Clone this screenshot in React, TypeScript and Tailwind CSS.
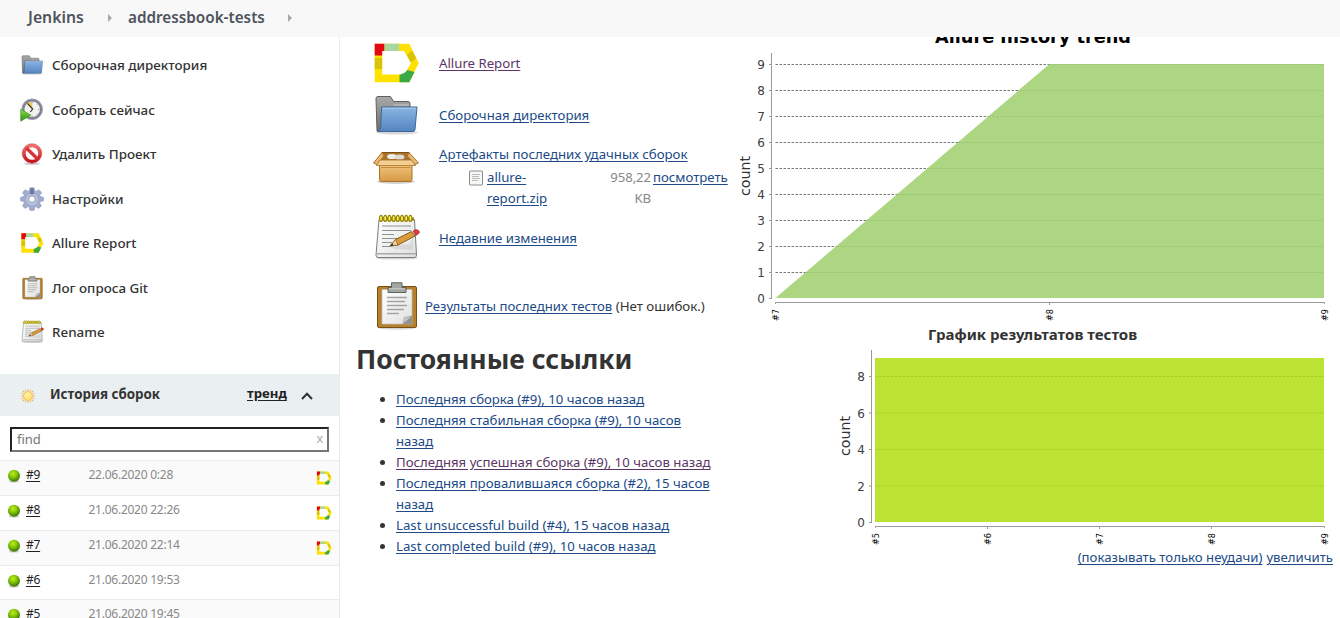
import type { ReactNode } from 'react';

type IconProps = { className?: string };

function Gradients() {
  return (
    <svg width="0" height="0" className="absolute" aria-hidden="true">
      <defs>
        <linearGradient id="blue" x1="0" y1="0" x2="0" y2="1"><stop offset="0" stopColor="#8ab4e2" /><stop offset="1" stopColor="#5484c0" /></linearGradient>
        <linearGradient id="grey" x1="0" y1="0" x2="0" y2="1"><stop offset="0" stopColor="#a9aaa8" /><stop offset="1" stopColor="#6d6e6c" /></linearGradient>
        <linearGradient id="box" x1="0" y1="0" x2="0" y2="1"><stop offset="0" stopColor="#f3c67f" /><stop offset="1" stopColor="#d59a45" /></linearGradient>
        <linearGradient id="paper" x1="0" y1="0" x2="1" y2="1"><stop offset="0" stopColor="#ffffff" /><stop offset="1" stopColor="#dfe0e0" /></linearGradient>
        <linearGradient id="red" x1="0" y1="0" x2="0" y2="1"><stop offset="0" stopColor="#f07070" /><stop offset="1" stopColor="#c41418" /></linearGradient>
        <linearGradient id="play" x1="0" y1="0" x2="0" y2="1"><stop offset="0" stopColor="#8be04a" /><stop offset="1" stopColor="#2f8a10" /></linearGradient>
        <radialGradient id="ball" cx="0.42" cy="0.32" r="0.65"><stop offset="0" stopColor="#bdf016" /><stop offset="0.5" stopColor="#83c40a" /><stop offset="1" stopColor="#3f7806" /></radialGradient>
        <radialGradient id="sun" cx="0.45" cy="0.4" r="0.6"><stop offset="0" stopColor="#fff6b0" /><stop offset="1" stopColor="#fbd75a" /></radialGradient>
      </defs>
    </svg>
  );
}

function AllureIcon({ className }: IconProps) {
  return (
    <svg viewBox="0 0 48 48" className={className}>
      <path fill="#ffe100" fillRule="evenodd" d="M2.7 4.7H37.3L46.7 24L37.3 43.3H2.7ZM10.2 12V35.5H29L32.5 35L39 24L32 12Z" />
      <path fill="#e30613" d="M2.7 4.7H12.5V12H10.2V16.5H2.7Z" />
      <path fill="#a8d8a0" d="M12.5 4.7H27V12H12.5Z" />
      <path fill="#d9c20a" d="M2.7 19H10.2V30H2.7ZM35 16L40 11.5L44.4 19.5L38.6 23.5Z" />
      <path fill="#3ba946" d="M27.5 36L33 33.5L35.5 31L42.5 33L37.3 43.3H27.5Z" />
    </svg>
  );
}

function FolderIcon({ className }: IconProps) {
  return (
    <svg viewBox="0 0 48 48" className={className}>
      <ellipse cx="25" cy="41.5" rx="21" ry="2" fill="#d8d8d8" />
      <path d="M5 40L4 7.5Q4 5.5 6 5.5H18.5L21.5 10.5H36Q38 10.5 38 12.5V39Z" fill="url(#grey)" stroke="#5f605e" />
      <path d="M21.5 14H37" stroke="#c9cac8" />
      <path d="M9.5 16H45L43 38.5Q42.8 40.5 41 40.5H5.5Q8.5 39 8.7 36Z" fill="url(#blue)" stroke="#3d659b" />
      <path d="M10.5 17.2H43.7" stroke="#b5d0ee" strokeWidth="0.9" />
    </svg>
  );
}

function BoxIcon({ className }: IconProps) {
  return (
    <svg viewBox="0 0 48 48" className={className}>
      <ellipse cx="24" cy="38.7" rx="19" ry="2.2" fill="#d5d2cd" />
      <path d="M10 9.5H37L41 20H6Z" fill="#a8742d" stroke="#7d5018" />
      <ellipse cx="20" cy="13.5" rx="5" ry="2.6" fill="#efede8" /><ellipse cx="27.5" cy="14" rx="5" ry="2.6" fill="#dedbd4" />
      <path d="M7.5 21H40V36.5Q40 38.5 38 38.5H9.5Q7.5 38.5 7.5 36.5Z" fill="url(#box)" stroke="#a87328" />
      <path d="M10 9.5L1.5 20L5 21.5L12 13ZM37 9.5L46.5 20L43 21.5L35.5 13Z" fill="#e9ba72" stroke="#a87328" />
      <path d="M8 17H39.5L43.5 22.5H4.5Z" fill="#f4cf94" stroke="#a87328" strokeWidth="0.8" />
      <path d="M9 24.5H38.5" stroke="#c58d3c" strokeWidth="1" />
    </svg>
  );
}

function NotepadIcon({ className }: IconProps) {
  return (
    <svg viewBox="0 0 48 48" className={className}>
      <ellipse cx="25" cy="44" rx="21" ry="1.6" fill="#d5d5d5" />
      <path d="M7 5.5H42.5L44.5 41Q44.5 43.5 42.5 43.5H6Q4 43.5 4 41Z" fill="url(#paper)" stroke="#7c7d7b" />
      <path d="M5 39.7H44" stroke="#a9aaa9" strokeWidth="1.5" />
      <path d="M10 12H39M10 16.5H39M10 20.5H22M10 24.5H34M10 28.5H20M10 32.5H19" stroke="#90928f" strokeWidth="1.1" />
      <path d="M19 32L38 30L41 23V36L22 35Z" fill="#c8c8c8" opacity="0.5" />
      <path d="M7 5H42" stroke="#94860b" strokeWidth="3" />
      <g fill="#fff25b" stroke="#94860b" strokeWidth="1.2">
        <ellipse cx="9" cy="4.4" rx="1.5" ry="3" /><ellipse cx="13.2" cy="4.4" rx="1.5" ry="3" /><ellipse cx="17.4" cy="4.4" rx="1.5" ry="3" /><ellipse cx="21.6" cy="4.4" rx="1.5" ry="3" /><ellipse cx="25.8" cy="4.4" rx="1.5" ry="3" /><ellipse cx="30" cy="4.4" rx="1.5" ry="3" /><ellipse cx="34.2" cy="4.4" rx="1.5" ry="3" /><ellipse cx="38.4" cy="4.4" rx="1.5" ry="3" />
      </g>
      <path d="M18 32L23.5 25.5L39.5 17.5L43 22L26 31Z" fill="#d99a3d" stroke="#7e5012" strokeWidth="0.9" />
      <path d="M18 32L23.5 25.5L26 31Z" fill="#f0d3a0" stroke="#7e5012" strokeWidth="0.6" />
      <path d="M18 32L20.4 29.2L21.4 31.6Z" fill="#222" />
      <path d="M41 17L43.5 15.7Q47.5 15.5 47.3 19L44 21.4Z" fill="#dd3c3c" stroke="#a32626" strokeWidth="0.7" />
    </svg>
  );
}

function ClipboardIcon({ className }: IconProps) {
  return (
    <svg viewBox="0 0 48 48" className={className}>
      <ellipse cx="25" cy="46.3" rx="18" ry="1.5" fill="#d5d5d5" />
      <rect x="5.5" y="4.5" width="39" height="41" rx="1.5" fill="#b7802e" stroke="#79500f" />
      <path d="M10 7.5H40V42H10Z" fill="url(#paper)" stroke="#bfc0be" strokeWidth="0.7" />
      <path d="M40 34L31 42H40Z" fill="#8e9190" /><path d="M31 42L32.5 35.5L40 34Z" fill="#c6c8c7" stroke="#8e9190" strokeWidth="0.6" />
      <path d="M15 15.5H35M15 19.5H33M15 23.5H35M15 27.5H32M15 31.5H27" stroke="#a2a4a1" strokeWidth="1.5" />
      <path d="M16 5.5H19.5V0.8H30V5.5H34V10.5H16Z" fill="#a3a6a1" stroke="#5f625e" />
      <path d="M17 6.8H33" stroke="#d3d5d1" strokeWidth="0.9" />
    </svg>
  );
}

function ClockIcon({ className }: IconProps) {
  return (
    <svg viewBox="0 0 24 24" className={className}>
      <circle cx="12.2" cy="11.3" r="9.2" fill="#f2f2ee" stroke="#7e8193" strokeWidth="2.8" />
      <circle cx="12.2" cy="11.3" r="10.3" fill="none" stroke="#a9acbb" strokeWidth="0.9" />
      <path d="M12.5 11.3L6.2 5.8L12 3.5Z" fill="#e9cf63" />
      <path d="M7.5 5.3L12.7 11L10.3 14" fill="none" stroke="#333" strokeWidth="1.2" />
      <path d="M12.2 4.2V5.2M19.3 11.5H18.3M12.2 18.5V17.5M17.2 6.5L16.6 7.1M17.2 16.5L16.6 15.9" stroke="#777" strokeWidth="0.8" />
      <path d="M0.7 11.3L11 17.1L0.7 23.3Z" fill="url(#play)" stroke="#3b9415" strokeWidth="0.6" />
    </svg>
  );
}

function ForbiddenIcon({ className }: IconProps) {
  return (
    <svg viewBox="0 0 24 24" className={className}>
      <ellipse cx="12" cy="21.7" rx="8" ry="1.2" fill="#ccc" />
      <circle cx="12" cy="11.5" r="8" fill="#fff" stroke="url(#red)" strokeWidth="3.4" />
      <path d="M6.3 6L17.7 17" stroke="#d83436" strokeWidth="3.3" />
      <circle cx="12" cy="11.5" r="9.8" fill="none" stroke="#c22a2c" strokeWidth="0.5" />
    </svg>
  );
}

function GearIcon({ className }: IconProps) {
  return (
    <svg viewBox="0 0 24 24" className={className}>
      <path fillRule="evenodd" fill="#a3add0" stroke="#8089ab" strokeWidth="0.6" strokeLinejoin="round" d="M10 0.8H14L14.8 4L16 4.6L19 2.9L21.6 5.5L19.6 8.4L20.2 9.6L23.4 10.4V13.8L20.1 14.5L19.5 16L21.4 18.8L18.8 21.4L16 19.5L14.8 20L14 23.3H10L9.2 20L8 19.5L5 21.4L2.5 18.8L4.4 16L3.9 14.5L0.6 13.8V10.4L3.8 9.6L4.4 8.3L2.6 5.4L5.2 2.8L8 4.6L9.2 4ZM12 8.9A3.2 3.2 0 1 0 12 15.3A3.2 3.2 0 1 0 12 8.9Z" />
      <circle cx="12" cy="12.1" r="4.9" fill="none" stroke="#bcc4df" strokeWidth="1.8" />
      <path d="M10.5 1.3H13.5L14.2 6.5L12 7.5L9.8 6.5Z" fill="#6b789f" />
    </svg>
  );
}

function SunIcon({ className }: IconProps) {
  return (
    <svg viewBox="0 0 16 16" className={className}>
      <path d="M8 1.2V14.8M1.2 8H14.8M3 3L13 13M13 3L3 13M5.3 1.7L10.7 14.3M10.7 1.7L5.3 14.3M1.7 5.3L14.3 10.7M1.7 10.7L14.3 5.3" stroke="#e6b468" strokeWidth="1.1" />
      <circle cx="8" cy="8" r="5.6" fill="#fbeed0" />
      <circle cx="8" cy="8" r="4.6" fill="url(#sun)" stroke="#e9b252" strokeWidth="0.7" />
    </svg>
  );
}

function BallIcon({ className }: IconProps) {
  return (
    <svg viewBox="0 0 14 14" className={className}>
      <ellipse cx="7" cy="12.4" rx="5" ry="1.1" fill="#ccc" />
      <circle cx="7" cy="6.8" r="6" fill="url(#ball)" />
    </svg>
  );
}

const tasks: { label: string; icon: ReactNode }[] = [
  { label: 'Сборочная директория', icon: <FolderIcon className="size-6" /> },
  { label: 'Собрать сейчас', icon: <ClockIcon className="size-6" /> },
  { label: 'Удалить Проект', icon: <ForbiddenIcon className="size-6" /> },
  { label: 'Настройки', icon: <GearIcon className="size-6" /> },
  { label: 'Allure Report', icon: <AllureIcon className="size-6" /> },
  { label: 'Лог опроса Git', icon: <ClipboardIcon className="size-6" /> },
  { label: 'Rename', icon: <NotepadIcon className="size-6" /> },
];

const builds = [
  { id: '#9', date: '22.06.2020 0:28', allure: true, row: 'h-[35px] bg-[#fafafa]' },
  { id: '#8', date: '21.06.2020 22:26', allure: true, row: 'h-[35px] bg-white' },
  { id: '#7', date: '21.06.2020 22:14', allure: true, row: 'h-[35px] bg-[#fafafa]' },
  { id: '#6', date: '21.06.2020 19:53', allure: false, row: 'h-[34px] bg-white' },
  { id: '#5', date: '21.06.2020 19:45', allure: false, row: 'h-[35px] bg-[#fafafa]' },
];

const links = [
  { lines: ['Последняя сборка (#9), 10 часов назад'] },
  { lines: ['Последняя стабильная сборка (#9), 10 часов', 'назад'] },
  { lines: ['Последняя успешная сборка (#9), 10 часов назад'], visited: true },
  { lines: ['Последняя провалившаяся сборка (#2), 15 часов', 'назад'] },
  { lines: ['Last unsuccessful build (#4), 15 часов назад'] },
  { lines: ['Last completed build (#9), 10 часов назад'] },
];

function Crumb() {
  return <svg viewBox="0 0 4 8" className="h-2 w-1"><path d="M0 0L4 4L0 8Z" fill="#a8a8a8" /></svg>;
}

function Link({ children, visited }: { children: ReactNode; visited?: boolean }) {
  return <a href="#" className={visited ? 'text-[#5c3566] underline underline-offset-2' : 'text-[#204a87] underline underline-offset-2'}>{children}</a>;
}

function Sidebar() {
  return (
    <aside className="flex w-[340px] shrink-0 flex-col overflow-hidden border-r border-[#e8ebee]">
      <ul className="mt-[6px] h-[331px] shrink-0 text-[13.4px] font-medium text-[#333]">
        {tasks.map((t) => (
          <li key={t.label} className="flex h-[44.5px] items-center gap-2 pl-5">{t.icon}<a href="#">{t.label}</a></li>
        ))}
      </ul>
      <div className="flex h-[42px] shrink-0 items-center bg-[#eaeff2] text-[13.35px] font-bold text-[#333]">
        <SunIcon className="ml-5 mt-0.5 size-4" />
        <span className="-mt-0.5 ml-[14px] w-[197px]">История сборок</span>
        <a href="#" className="-mt-0.5 w-[40px] text-[13.2px] text-[#222] underline underline-offset-2">тренд</a>
        <svg viewBox="0 0 12 8" className="ml-[14px] mt-0.5 h-2 w-3"><path d="M1 7L6 1.7L11 7" fill="none" stroke="#333" strokeWidth="2" /></svg>
      </div>
      <div className="mx-[10px] mb-[8px] mt-[11px] flex h-[25px] shrink-0 items-center justify-between border-2 border-[#767676] border-l-[#222] border-t-[#222] bg-white pl-[5px] pr-[4px] text-[13px] text-[#757575]">
        <span className="mt-px">find</span><span className="-mt-px text-[12.5px] text-[#aaa]">x</span>
      </div>
      {builds.map((b) => (
        <div key={b.id} className={`flex shrink-0 items-start border-t border-[#e8ebee] pt-[5px] leading-[18px] text-[12px] tracking-[-0.25px] ${b.row}`}>
          <BallIcon className="ml-[7px] mt-[3px] size-3.5" />
          <a href="#" className="ml-[5px] w-[62.5px] text-[#222] underline underline-offset-2">{b.id}</a>
          <span className="flex-1 text-[#888]">{b.date}</span>
          {b.allure && <AllureIcon className="mr-[7px] mt-[4px] size-4" />}
        </div>
      ))}
    </aside>
  );
}

function Summary() {
  return (
    <section className="w-[400px] shrink-0 text-[13.2px] leading-[21px] text-[#333]">
      <div className="ml-[32px] flex flex-col gap-1 pt-[2px]">
        <div className="flex h-12 items-center gap-[19px]"><AllureIcon className="size-12" /><Link visited>Allure Report</Link></div>
        <div className="flex h-12 items-center gap-[19px]"><FolderIcon className="size-12" /><Link>Сборочная директория</Link></div>
        <div className="flex h-[67px] items-start gap-[19px]">
          <BoxIcon className="size-12 shrink-0" />
          <div className="mt-px flex flex-1 flex-col gap-[2px] text-[13.25px]">
            <Link>Артефакты последних удачных сборок</Link>
            <div className="flex items-start text-[13.2px]">
              <svg viewBox="0 0 16 16" className="ml-[29px] mt-[3px] size-4 shrink-0"><rect x="1.5" y="1" width="13" height="14" rx="0.5" fill="#f7f7f6" stroke="#8a8c88" /><path d="M4 4.5H12M4 6.5H11M4 8.5H12M4 10.5H10" stroke="#a9aba8" strokeWidth="0.8" /></svg>
              <span className="ml-[3px] w-[104px]"><Link>allure-<br />report.zip</Link></span>
              <span className="w-[60px] text-right tracking-[-0.1px] text-[#888]">958,22<br />KB</span>
              <span className="ml-[2px]"><Link>посмотреть</Link></span>
            </div>
          </div>
        </div>
        <div className="flex h-12 items-center gap-[19px]"><NotepadIcon className="size-12" /><Link>Недавние изменения</Link></div>
      </div>
      <div className="ml-[32px] mt-5 flex h-12 items-center gap-[5px]">
        <ClipboardIcon className="size-12" />
        <span className="whitespace-nowrap text-[13.2px]"><Link>Результаты последних тестов</Link> <span className="text-[13.3px]">(Нет ошибок.)</span></span>
      </div>
      <h2 className="ml-[16px] mt-[11px] text-[26.5px] leading-9 font-bold">Постоянные ссылки</h2>
      <ul className="ml-[56px] mt-[12px] list-disc whitespace-nowrap">
        {links.map((l) => (
          <li key={l.lines[0]}><Link visited={l.visited}>{l.lines[0]}{l.lines[1] && <><br />{l.lines[1]}</>}</Link></li>
        ))}
      </ul>
    </section>
  );
}

function HistoryChart() {
  const ticks = [0, 1, 2, 3, 4, 5, 6, 7, 8, 9];
  return (
    <svg viewBox="740 37 600 286" className="block h-[286px] w-[600px] shrink-0 font-[family-name:'DejaVu_Sans',sans-serif]">
      <text x="935" y="43" fontSize="18" fontWeight="bold" textLength="196" lengthAdjust="spacingAndGlyphs">Allure history trend</text>
      {ticks.map((t) => (
        <g key={t}>
          {t > 0 && <path d={`M775.5 ${298.5 - t * 26}H1324`} stroke="#777" strokeDasharray="2.5 1.5" />}
          <path d={`M769 ${298.5 - t * 26}H772`} stroke="#999" />
          <text x="765" y={303 - t * 26} fontSize="12" textAnchor="end" fill="#404040">{t}</text>
        </g>
      ))}
      <path d="M775.5 298L1049.5 64H1324V298Z" fill="#add683" />
      {ticks.slice(1).map((t) => <path key={t} d={`M${775.5 + t * 30.4} ${298.5 - t * 26}H1324`} stroke="#93bd6c" strokeOpacity="0.7" strokeDasharray="2.5 1.5" />)}
      <path d="M771.5 53V299M775.5 304V302.5H1324.5V304M1049.5 302.5V305" fill="none" stroke="#999" />
      {[{ n: '#7', x: 775 }, { n: '#8', x: 1049 }, { n: '#9', x: 1324 }].map((t) => (
        <text key={t.n} transform={`translate(${t.x + 4} 321) rotate(-90)`} fontSize="9" textLength="12" lengthAdjust="spacingAndGlyphs" fill="#000">{t.n}</text>
      ))}
      <text transform="translate(750 196) rotate(-90)" fontSize="14" textLength="40" lengthAdjust="spacingAndGlyphs" fill="#333">count</text>
    </svg>
  );
}

function ResultsChart() {
  const ticks = [0, 2, 4, 6, 8];
  return (
    <svg viewBox="838 346 502 200" className="block h-[200px] w-[502px] shrink-0 self-end font-[family-name:'DejaVu_Sans',sans-serif]">
      <path d="M875 358H1324V522H875Z" fill="#bce333" />
      {ticks.map((t) => (
        <g key={t}>
          {t > 0 && <path d={`M875 ${522.5 - t * 18.25}H1324`} stroke="#a5cc2b" strokeDasharray="2.5 1.5" />}
          <path d={`M869 ${522.5 - t * 18.25}H872`} stroke="#999" />
          <text x="865" y={527 - t * 18.25} fontSize="12" textAnchor="end" fill="#404040">{t}</text>
        </g>
      ))}
      <path d="M871.5 350V523M875.5 528V526.5H1324.5V528M987.5 526.5V529M1099.5 526.5V529M1211.5 526.5V529" fill="none" stroke="#999" />
      {[{ n: '#5', x: 875 }, { n: '#6', x: 987 }, { n: '#7', x: 1099 }, { n: '#8', x: 1211 }, { n: '#9', x: 1324 }].map((t) => (
        <text key={t.n} transform={`translate(${t.x + 4} 545) rotate(-90)`} fontSize="9" textLength="12" lengthAdjust="spacingAndGlyphs" fill="#000">{t.n}</text>
      ))}
      <text transform="translate(850 456) rotate(-90)" fontSize="14" textLength="40" lengthAdjust="spacingAndGlyphs" fill="#333">count</text>
    </svg>
  );
}

export default function App() {
  return (
    <div className="flex h-[618px] w-[1340px] flex-col overflow-hidden bg-white font-['Noto_Sans','Open_Sans',sans-serif]">
      <Gradients />
      <header className="flex h-[37px] shrink-0 items-center bg-[#f8f8f8] pb-[2px] text-[15.25px] font-semibold text-[#4d545d]">
        <a href="#" className="ml-7 w-[80px] text-[15.8px]">Jenkins</a>
        <Crumb />
        <a href="#" className="ml-4 w-[160px]">addressbook-tests</a>
        <Crumb />
      </header>
      <main className="flex min-h-0 flex-1">
        <Sidebar />
        <Summary />
        <section className="flex w-[600px] flex-col text-[13.2px]">
          <HistoryChart />
          <h3 className="ml-[188px] h-[23px] text-[15.05px] leading-[23px] font-bold text-[#333]">График результатов тестов</h3>
          <ResultsChart />
          <div className="flex justify-end gap-1 pr-[7px] leading-[22px]"><Link>(показывать только неудачи)</Link><Link>увеличить</Link></div>
        </section>
      </main>
    </div>
  );
}
